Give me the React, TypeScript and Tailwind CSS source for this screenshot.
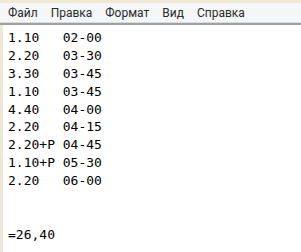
const lines = [
  "1.10   02-00",
  "2.20   03-30",
  "3.30   03-45",
  "1.10   03-45",
  "4.40   04-00",
  "2.20   04-15",
  "2.20+P 04-45",
  "1.10+P 05-30",
  "2.20   06-00",
  "",
  "",
  "=26,40",
];

const menu = ["Файл", "Правка", "Формат", "Вид", "Справка"];

export default function App() {
  return (
    <div className="flex h-[252px] w-[301px] flex-col overflow-hidden bg-[#ece9d8]">
      <div className="mt-[3px] flex h-[19px] items-center gap-[13px] bg-[#f5f6f7] pl-[8px] font-['Roboto',sans-serif] text-[12px] text-[#2a2a2a]">
        {menu.map((m) => (
          <span key={m}>{m}</span>
        ))}
      </div>
      <div className="h-px bg-[#dcdcdc]" />
      <div className="h-[2px] bg-[#a0a0a0]" />
      <div className="ml-[3px] flex-1 bg-white pl-[5px] pt-[4px] font-['DejaVu_Sans_Mono',monospace] text-[13px] leading-[17.9px] text-black">
        {lines.map((l, i) => (
          <div key={i} className="h-[17.9px] whitespace-pre">
            {l}
          </div>
        ))}
      </div>
    </div>
  );
}
